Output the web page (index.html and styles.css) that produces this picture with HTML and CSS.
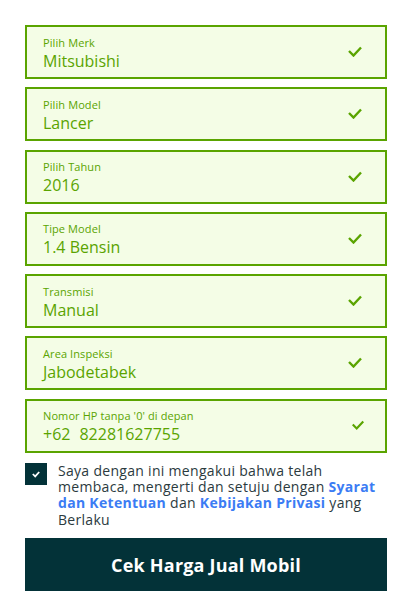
FILE: index.html
```html
<!DOCTYPE html>
<html lang="id">
<head>
    <meta charset="UTF-8">
    <meta name="viewport" content="width=device-width, initial-scale=1.0">
    <title>Cek Harga Jual Mobil</title>
    <link rel="stylesheet" href="styles.css">
</head>
<body>
    <main class="sell-form">
        <div class="field">
            <div class="field-text">
                <span class="field-label">Pilih Merk</span>
                <span class="field-value">Mitsubishi</span>
            </div>
            <svg class="tick" viewBox="0 0 16 12"><path d="M2 6l4.5 4.5L14 2.5"/></svg>
        </div>
        <div class="field">
            <div class="field-text">
                <span class="field-label">Pilih Model</span>
                <span class="field-value">Lancer</span>
            </div>
            <svg class="tick" viewBox="0 0 16 12"><path d="M2 6l4.5 4.5L14 2.5"/></svg>
        </div>
        <div class="field">
            <div class="field-text">
                <span class="field-label">Pilih Tahun</span>
                <span class="field-value">2016</span>
            </div>
            <svg class="tick" viewBox="0 0 16 12"><path d="M2 6l4.5 4.5L14 2.5"/></svg>
        </div>
        <div class="field">
            <div class="field-text">
                <span class="field-label">Tipe Model</span>
                <span class="field-value">1.4 Bensin</span>
            </div>
            <svg class="tick" viewBox="0 0 16 12"><path d="M2 6l4.5 4.5L14 2.5"/></svg>
        </div>
        <div class="field">
            <div class="field-text">
                <span class="field-label">Transmisi</span>
                <span class="field-value">Manual</span>
            </div>
            <svg class="tick" viewBox="0 0 16 12"><path d="M2 6l4.5 4.5L14 2.5"/></svg>
        </div>
        <div class="field">
            <div class="field-text">
                <span class="field-label">Area Inspeksi</span>
                <span class="field-value">Jabodetabek</span>
            </div>
            <svg class="tick" viewBox="0 0 16 12"><path d="M2 6l4.5 4.5L14 2.5"/></svg>
        </div>
        <div class="field field-phone">
            <div class="field-text">
                <span class="field-label">Nomor HP tanpa '0' di depan</span>
                <span class="field-value"><span class="prefix">+62</span>82281627755</span>
            </div>
            <svg class="tick small" viewBox="0 0 16 12"><path d="M2 6l4.5 4.5L14 2.5"/></svg>
        </div>

        <label class="agree">
            <span class="checkbox">
                <svg viewBox="0 0 12 10"><path d="M2 5l3 3 5-5.5"/></svg>
            </span>
            <span class="agree-text">Saya dengan ini mengakui bahwa telah membaca, mengerti dan setuju dengan <a href="#">Syarat dan Ketentuan</a> dan <a href="#">Kebijakan Privasi</a> yang Berlaku</span>
        </label>

        <button class="submit" type="button">Cek Harga Jual Mobil</button>
    </main>
</body>
</html>
```

FILE: styles.css
```css
body {
    margin: 0;
    background-color: #fff;
    font-family: 'Open Sans', 'Liberation Sans', sans-serif;
    color: #2b3a3e;
}
.sell-form {
    display: flex;
    flex-direction: column;
    gap: 8.3px;
    padding: 25px 24px 0 25px;
}
.field {
    display: flex;
    align-items: center;
    justify-content: space-between;
    height: 54px;
    box-sizing: border-box;
    border: 2px solid #5aa400;
    background-color: #f4fde6;
    padding: 0 22px 0 16px;
    color: #5aa400;
}
.field-text {
    display: flex;
    flex-direction: column;
    padding-top: 3px;
}
.field-label {
    font-size: 11px;
    line-height: 14px;
    letter-spacing: 0.1px;
}
.field-value {
    font-size: 16px;
    line-height: 22px;
}
.prefix {
    margin-right: 9px;
}
.tick {
    width: 16px;
    height: 12px;
    margin-top: -2px;
}
.tick path {
    fill: none;
    stroke: #5aa400;
    stroke-width: 2.4;
}
.tick.small {
    width: 14px;
    height: 11px;
    margin-right: -2px;
}
.agree {
    display: flex;
    align-items: flex-start;
    gap: 11px;
    margin-top: 1.7px;
}
.checkbox {
    flex: none;
    width: 22px;
    height: 22px;
    background-color: #033238;
    display: flex;
    align-items: center;
    justify-content: center;
}
.checkbox svg {
    width: 10px;
    height: 8px;
}
.checkbox path {
    fill: none;
    stroke: #fff;
    stroke-width: 2.2;
}
.agree-text {
    font-size: 14px;
    line-height: 16.3px;
    letter-spacing: 0.3px;
}
.agree-text a {
    color: #3b7cf4;
    font-weight: bold;
    text-decoration: none;
}
.submit {
    margin-top: 2px;
    height: 53px;
    border: none;
    background-color: #033238;
    color: #fff;
    font-family: inherit;
    font-size: 18px;
    font-weight: bold;
    letter-spacing: 0.2px;
}
```
